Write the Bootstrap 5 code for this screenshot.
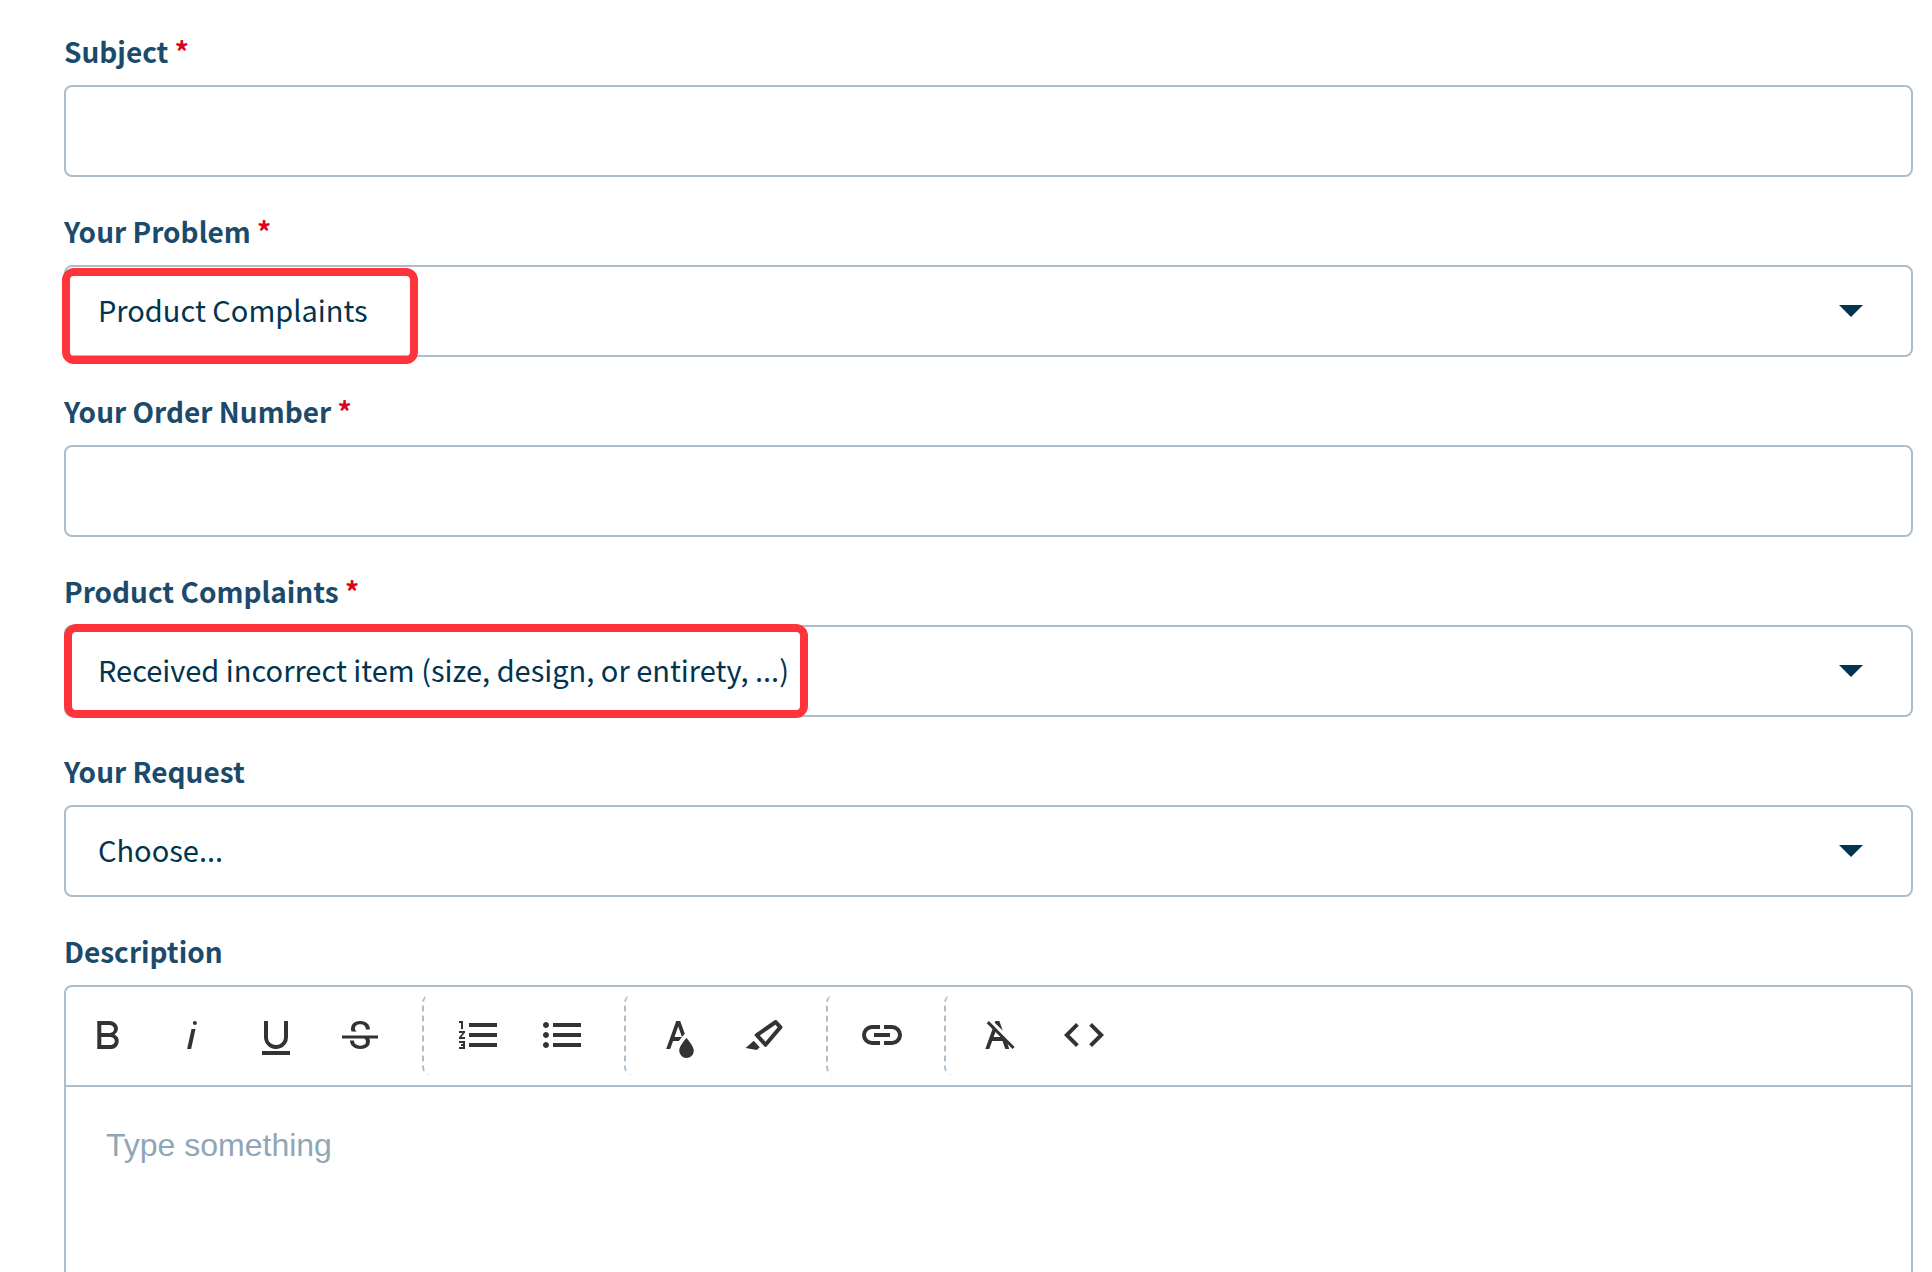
<!DOCTYPE html>
<html lang="en">
<head>
<meta charset="utf-8">
<meta name="viewport" content="width=device-width, initial-scale=1">
<title>Submit a request</title>
<link href="https://cdn.jsdelivr.net/npm/bootstrap@5.3.0/dist/css/bootstrap.min.css" rel="stylesheet">
<style>
  body { font-family: "Noto Sans CJK SC", "Noto Sans", sans-serif; font-size: 29px; color: #00344f; background: #fff; }
  .request-form { padding: 29px 19px 0 64px; }
  .request-form .form-label { font-weight: 700; font-size: 28px; line-height: 44px; color: #1b4a6b; margin: 0 0 12px; }
  .required-mark { color: #e0001a; }
  .field-group { margin-bottom: 32px; }
  .request-form .form-control, .request-form .form-select {
    height: 92px; border: 2px solid #adbdca; border-radius: 8px; font-size: 29px; line-height: 44px; color: #00344f; padding: 20px 32px;
  }
  .request-form .form-select {
    padding: 18px 96px 22px 32px;
    background-image: url("data:image/svg+xml,%3Csvg xmlns='http://www.w3.org/2000/svg' viewBox='0 0 24 12'%3E%3Cpath d='M0 0h24L12 12z' fill='%2300344f'/%3E%3C/svg%3E");
    background-size: 24px 12px; background-position: right 48px center;
  }
  .callout-frame { border: 8px solid #ff343a; border-radius: 12px; pointer-events: none; }
  .callout-problem { left: -2px; top: 3px; width: 356px; height: 96px; }
  .callout-complaint { left: 0; top: -1px; width: 744px; height: 94px; }
  .editor { border: 2px solid #adbdca; border-bottom: 0; border-radius: 8px 8px 0 0; }
  .editor-toolbar { padding: 8px 0 10px; border-bottom: 2px solid #adbdca; }
  .tool-group { height: 80px; padding-right: 20px; }
  .tool-group + .tool-group { border-left: 2px dashed #adbdca; border-radius: 8px; padding-left: 12px; }
  .tool-btn { width: 84px; height: 80px; padding: 0; border: 0; border-radius: 8px; }
  .tool-btn svg { width: 48px; height: 48px; fill: #333; display: block; }
  .request-form .editor-area {
    border: 0; border-radius: 0; height: auto; resize: none; padding: 36px 40px; font-family: "Liberation Sans", Arial, sans-serif; font-size: 32px;
  }
  .editor-area::placeholder { color: #8fa6b6 !important; }
</style>
</head>
<body>
<form class="request-form d-flex flex-column vh-100 overflow-hidden">
  <div class="field-group">
    <label class="form-label d-block" for="subject">Subject <span class="required-mark">*</span></label>
    <input class="form-control" type="text" id="subject" required>
  </div>
  <div class="field-group">
    <label class="form-label d-block" for="problem">Your Problem <span class="required-mark">*</span></label>
    <div class="position-relative">
      <select class="form-select" id="problem" required><option>Product Complaints</option></select>
      <span class="callout-frame callout-problem position-absolute"></span>
    </div>
  </div>
  <div class="field-group">
    <label class="form-label d-block" for="order">Your Order Number <span class="required-mark">*</span></label>
    <input class="form-control" type="text" id="order" required>
  </div>
  <div class="field-group">
    <label class="form-label d-block" for="complaint">Product Complaints <span class="required-mark">*</span></label>
    <div class="position-relative">
      <select class="form-select" id="complaint" required><option>Received incorrect item (size, design, or entirety, ...)</option></select>
      <span class="callout-frame callout-complaint position-absolute"></span>
    </div>
  </div>
  <div class="field-group">
    <label class="form-label d-block" for="request">Your Request</label>
    <select class="form-select" id="request"><option>Choose...</option></select>
  </div>
  <div class="d-flex flex-column flex-grow-1">
    <label class="form-label d-block" for="description">Description</label>
    <div class="editor d-flex flex-column flex-grow-1">
      <div class="editor-toolbar d-flex flex-wrap" role="toolbar" aria-label="Formatting">
        <div class="tool-group d-flex">
          <button type="button" class="btn tool-btn d-flex align-items-center justify-content-center" aria-label="Bold"><svg viewBox="0 0 24 24"><path d="M15.25,11.8h0A3.68,3.68,0,0,0,17,9a3.93,3.93,0,0,0-3.86-4H6.65V19h7a3.74,3.74,0,0,0,3.7-3.78V15.1A3.64,3.64,0,0,0,15.25,11.8ZM8.65,7h4.2a2.09,2.09,0,0,1,2,1.3,2.09,2.09,0,0,1-1.37,2.61,2.23,2.23,0,0,1-.63.09H8.65Zm4.6,10H8.65V13h4.6a2.09,2.09,0,0,1,2,1.3,2.09,2.09,0,0,1-1.37,2.61A2.23,2.23,0,0,1,13.25,17Z"/></svg></button>
          <button type="button" class="btn tool-btn d-flex align-items-center justify-content-center" aria-label="Italic"><svg viewBox="0 0 24 24"><path d="M11.76,9h2l-2.2,10h-2Zm1.68-4a1,1,0,1,0,1,1,1,1,0,0,0-1-1Z"/></svg></button>
          <button type="button" class="btn tool-btn d-flex align-items-center justify-content-center" aria-label="Underline"><svg viewBox="0 0 24 24"><path d="M19,20v2H5V20Zm-3-6.785a4,4,0,0,1-5.74,3.4A3.75,3.75,0,0,1,8,13.085V5.005H6v8.21a6,6,0,0,0,8,5.44,5.851,5.851,0,0,0,4-5.65v-8H16ZM16,5v0h2V5ZM8,5H6v0H8Z"/></svg></button>
          <button type="button" class="btn tool-btn d-flex align-items-center justify-content-center" aria-label="Strikethrough"><svg viewBox="0 0 24 24"><path d="M3,12.20294H21v1.5H16.63422a3.59782,3.59782,0,0,1,.34942,1.5929,3.252,3.252,0,0,1-1.31427,2.6997A5.55082,5.55082,0,0,1,12.20251,19a6.4421,6.4421,0,0,1-2.62335-.539,4.46335,4.46335,0,0,1-1.89264-1.48816,3.668,3.668,0,0,1-.67016-2.15546V14.704H9.02v.11334a2.18275,2.18275,0,0,0,.85413,1.83069,3.69,3.69,0,0,0,2.32836.67926,3.38778,3.38778,0,0,0,2.07666-.5462,1.73346,1.73346,0,0,0,.7013-1.46655,1.69749,1.69749,0,0,0-.647-1.43439,3.00525,3.00525,0,0,0-.27491-.17725H3ZM16.34473,7.05981A4.18163,4.18163,0,0,0,14.6236,5.5462,5.627,5.627,0,0,0,12.11072,5,5.16083,5.16083,0,0,0,8.74719,6.06213,3.36315,3.36315,0,0,0,7.44006,8.76855a3.22923,3.22923,0,0,0,.3216,1.42786h2.59668c-.08338-.05365-.18537-.10577-.25269-.16064a1.60652,1.60652,0,0,1-.65283-1.30036,1.79843,1.79843,0,0,1,.68842-1.5108,3.12971,3.12971,0,0,1,1.96948-.55243,3.04779,3.04779,0,0,1,2.106.6687,2.35066,2.35066,0,0,1,.736,1.83258v.11341h2.00317V9.17346A3.90013,3.90013,0,0,0,16.34473,7.05981Z"/></svg></button>
        </div>
        <div class="tool-group d-flex">
          <button type="button" class="btn tool-btn d-flex align-items-center justify-content-center" aria-label="Ordered list"><svg viewBox="0 0 24 24"><path d="M2.5,16h2v.5h-1v1h1V18h-2v1h3V15h-3Zm1-7h1V5h-2V6h1Zm-1,2H4.3L2.5,13.1V14h3V13H3.7l1.8-2.1V10h-3Zm5-5V8h14V6Zm0,12h14V16H7.5Zm0-5h14V11H7.5Z"/></svg></button>
          <button type="button" class="btn tool-btn d-flex align-items-center justify-content-center" aria-label="Unordered list"><svg viewBox="0 0 24 24"><path d="M4,10.5c-.8,0-1.5.7-1.5,1.5s.7,1.5,1.5,1.5,1.5-.7,1.5-1.5S4.8,10.5,4,10.5ZM4,5.5C3.2,5.5,2.5,6.2,2.5,7S3.2,8.5,4,8.5,5.5,7.8,5.5,7,4.8,5.5,4,5.5Zm0,10c-.8,0-1.5.7-1.5,1.5s.7,1.5,1.5,1.5,1.5-.7,1.5-1.5S4.8,15.5,4,15.5ZM7.5,6V8h14V6Zm0,12h14V16H7.5Zm0-5h14V11H7.5Z"/></svg></button>
        </div>
        <div class="tool-group d-flex">
          <button type="button" class="btn tool-btn d-flex align-items-center justify-content-center" aria-label="Text color"><svg viewBox="0 0 24 24"><path d="M15.2,13.494s-3.6,3.9-3.6,6.3a3.65,3.65,0,0,0,7.3.1v-.1C18.9,17.394,15.2,13.494,15.2,13.494Zm-1.47-1.357.669-.724L12.1,5h-2l-5,14h2l1.43-4h2.943A24.426,24.426,0,0,1,13.726,12.137ZM11.1,7.8l1.86,5.2H9.244Z"/></svg></button>
          <button type="button" class="btn tool-btn d-flex align-items-center justify-content-center" aria-label="Background color"><svg viewBox="0 0 24 24"><path d="M9.91752,12.24082l7.74791-5.39017,1.17942,1.29591-6.094,7.20747L9.91752,12.24082M7.58741,12.652l4.53533,4.98327a.93412.93412,0,0,0,1.39531-.0909L20.96943,8.7314A.90827.90827,0,0,0,20.99075,7.533l-2.513-2.76116a.90827.90827,0,0,0-1.19509-.09132L7.809,11.27135A.93412.93412,0,0,0,7.58741,12.652ZM2.7939,18.52772,8.41126,19.5l1.47913-1.34617-3.02889-3.328Z"/></svg></button>
        </div>
        <div class="tool-group d-flex">
          <button type="button" class="btn tool-btn d-flex align-items-center justify-content-center" aria-label="Insert link"><svg viewBox="0 0 24 24"><path d="M11,17H7A5,5,0,0,1,7,7h4V9H7a3,3,0,0,0,0,6h4ZM17,7H13V9h4a3,3,0,0,1,0,6H13v2h4A5,5,0,0,0,17,7Zm-1,4H8v2h8Z"/></svg></button>
        </div>
        <div class="tool-group d-flex">
          <button type="button" class="btn tool-btn d-flex align-items-center justify-content-center" aria-label="Clear formatting"><svg viewBox="0 0 24 24"><path d="M11.48,10.09l-1.2-1.21L8.8,7.41,6.43,5,5.37,6.1,8.25,9,4.66,19h2l1.43-4h5.14l1.43,4h2l-.89-2.51L18.27,19l1.07-1.06L14.59,13.2ZM8.8,13l.92-2.56L12.27,13Zm.56-7.15L9.66,5h2l1.75,4.9Z"/></svg></button>
          <button type="button" class="btn tool-btn d-flex align-items-center justify-content-center" aria-label="Code view"><svg viewBox="0 0 24 24"><path d="M9.4,16.6,4.8,12,9.4,7.4,8,6,2,12l6,6Zm5.2,0L19.2,12,14.6,7.4,16,6l6,6-6,6Z"/></svg></button>
        </div>
      </div>
      <textarea class="form-control editor-area flex-grow-1" id="description" placeholder="Type something"></textarea>
    </div>
  </div>
</form>
<script src="https://cdn.jsdelivr.net/npm/bootstrap@5.3.0/dist/js/bootstrap.bundle.min.js"></script>
</body>
</html>
